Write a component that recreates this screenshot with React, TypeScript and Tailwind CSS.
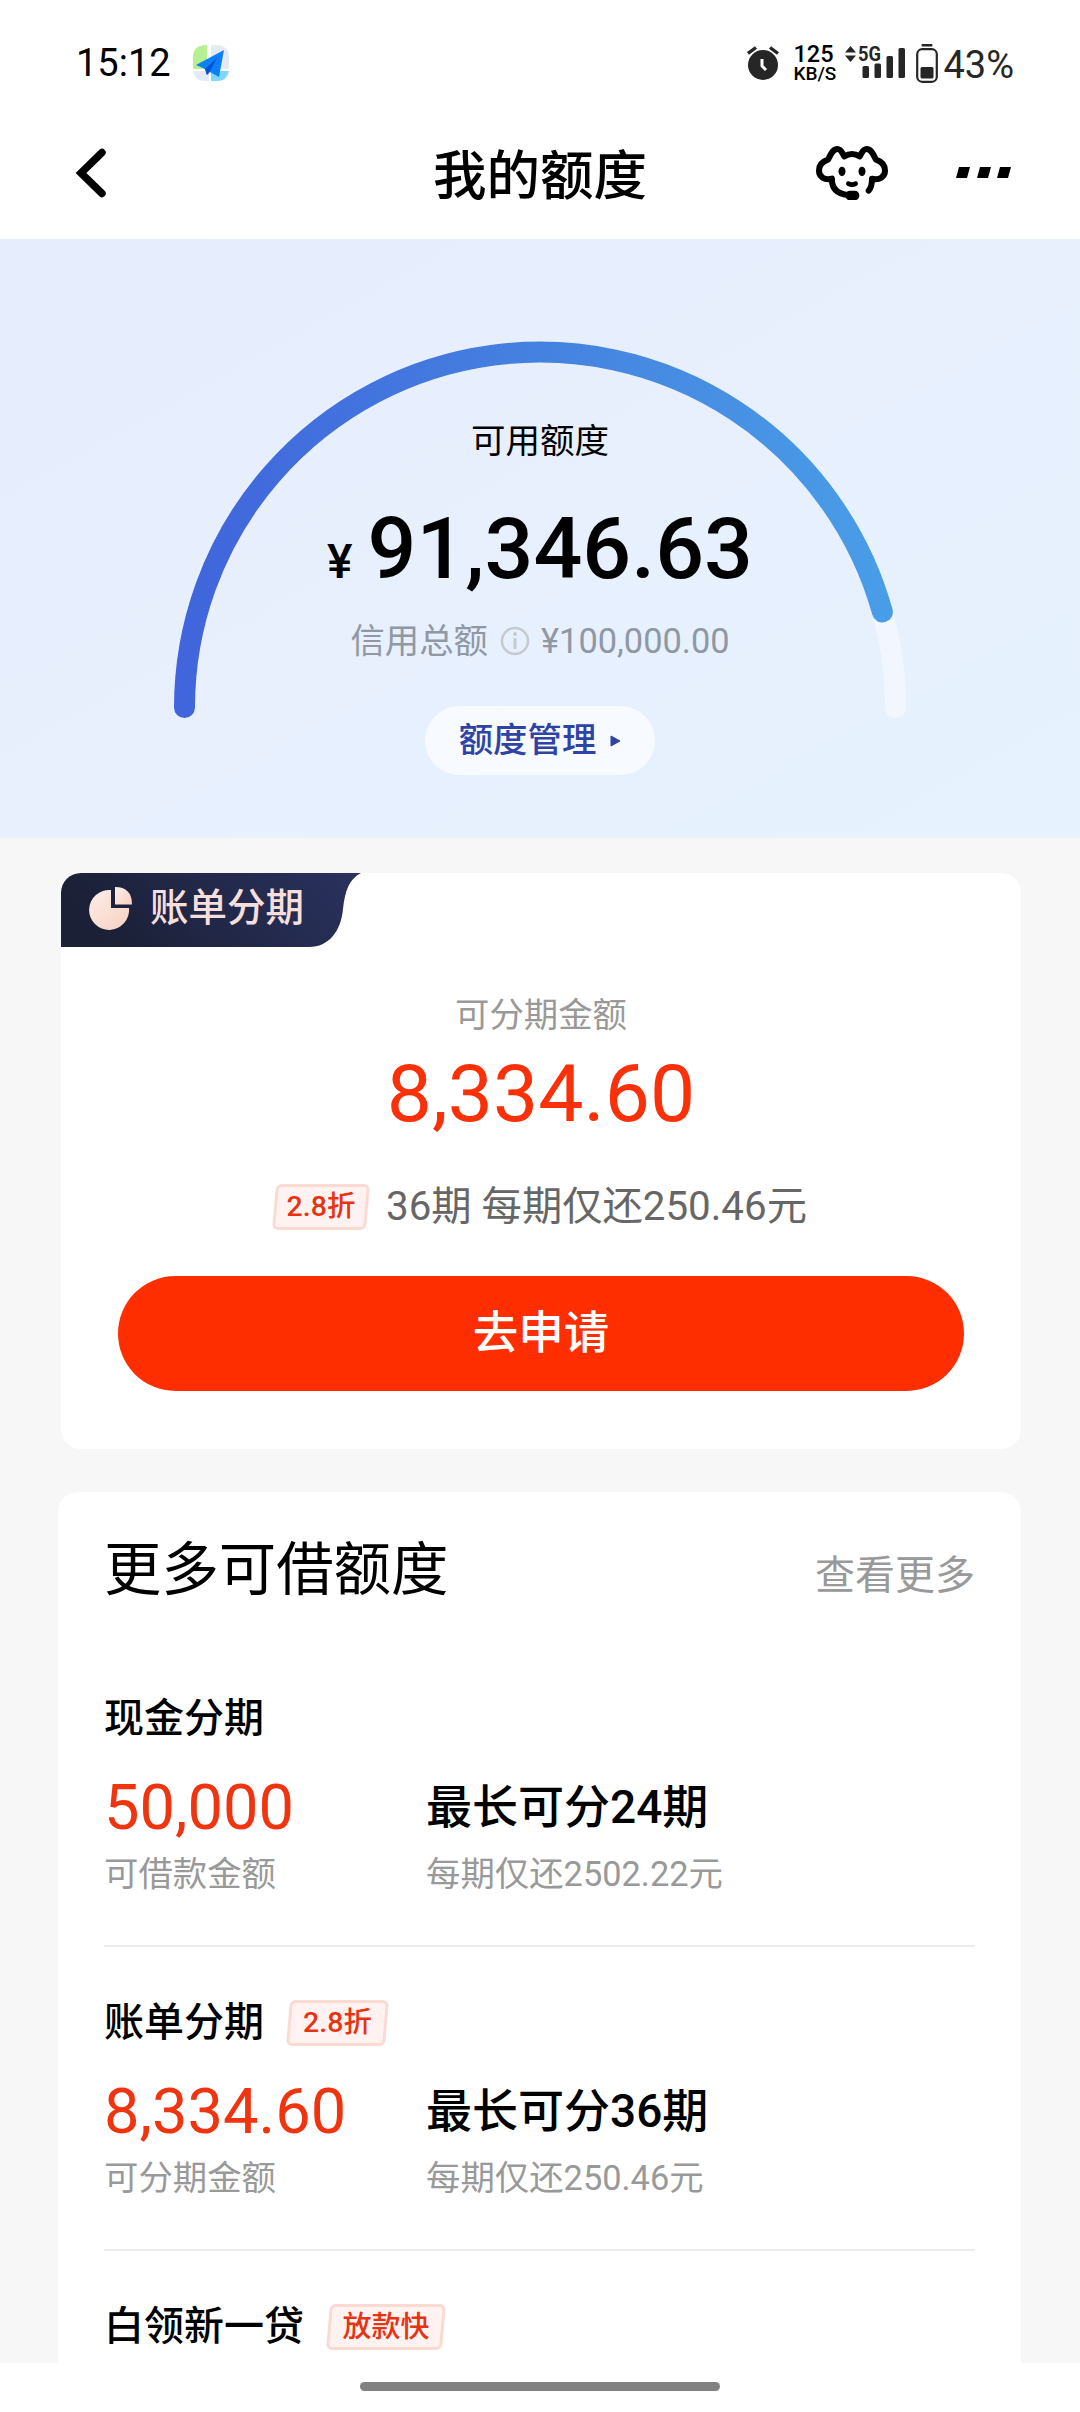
import { ReactNode } from 'react';

const FONT = "font-[Roboto,'Noto_Sans_CJK_SC',sans-serif]";

const LOANS = [
  {
    name: '现金分期',
    amount: '50,000',
    amountLabel: '可借款金额',
    term: '最长可分24期',
    monthly: '每期仅还2502.22元',
  },
  {
    name: '账单分期',
    tag: '2.8折',
    amount: '8,334.60',
    amountLabel: '可分期金额',
    term: '最长可分36期',
    monthly: '每期仅还250.46元',
  },
];

function Tag({ children, className }: { children: ReactNode; className: string }) {
  return (
    <span className={`relative flex h-[46px] items-center justify-center ${className}`}>
      <span className="absolute inset-y-0 inset-x-[2px] -skew-x-[5deg] rounded-md border-[3px] border-[#fbdad4] bg-[#fff2f0]" />
      <span className="relative font-medium leading-none text-[#e63312]">{children}</span>
    </span>
  );
}

function StatusBar() {
  return (
    <div className="flex h-[110px] items-center pt-4 pl-[76px] pr-[66px]">
      <span className="text-[38px] leading-10 text-black">15:12</span>
      <svg className="ml-[22px]" width="36" height="36" viewBox="0 0 36 36">
        <path d="M14 0v24H0V12Q0 0 14 0Z" fill="#b5f093" />
        <path d="M18 0h4q14 0 14 12v12H18Z" fill="#e6eaf1" />
        <path d="M0 26h16v10h-4Q2 36 0 26Z" fill="#e6eaf6" />
        <path d="M18 26h18q-2 10-12 10h-6Z" fill="#7fd5fb" />
        <path d="M31 5 3 20l9 4 2 6 3-3 9 5Z" fill="#0d80f8" />
        <path d="M24 13 12 24l2 6 3-4Z" fill="#0552d4" />
      </svg>
      <div className="ml-auto flex items-center text-[#262626]">
        <svg width="32" height="35" viewBox="0 0 32 35">
          <circle cx="16" cy="19" r="15" fill="currentColor" />
          <path d="M1 7.5 9 1.5M31 7.5 23 1.5" stroke="currentColor" strokeWidth="3.4" />
          <path d="M15 13v7l4 4" fill="none" stroke="#fff" strokeWidth="3" />
        </svg>
        <div className="ml-[14px] flex w-[45px] flex-col text-black">
          <span className="text-[23.500px] font-medium leading-[21px]">125</span>
          <span className="text-[19px] font-medium leading-[17px]">KB/S</span>
        </div>
        <svg className="ml-[7px] overflow-visible" width="62" height="36" viewBox="0 0 62 36">
          <path d="M0 7.500 5.500 1 11 7.500ZM0 10.500h11L5.500 17Z" fill="currentColor" />
          <text x="13" y="16" fontSize="21" fontWeight="700" textLength="23" lengthAdjust="spacingAndGlyphs" fill="currentColor">
            5G
          </text>
          <rect x="17.500" y="21" width="6.500" height="12" rx="1.500" fill="currentColor" />
          <rect x="29.500" y="18.500" width="6.500" height="14.500" rx="1.500" fill="currentColor" />
          <rect x="41.500" y="11" width="6.500" height="22" rx="1.500" fill="currentColor" />
          <rect x="53.500" y="3" width="6.500" height="30" rx="1.500" fill="currentColor" />
        </svg>
        <svg className="ml-[9px]" width="22" height="39" viewBox="0 0 22 39">
          <rect x="5.500" y="0" width="11" height="2.500" rx="1" fill="currentColor" />
          <rect x="1.200" y="5.200" width="19.600" height="32.600" rx="5" fill="none" stroke="currentColor" strokeWidth="2.200" />
          <rect x="4.500" y="23" width="13" height="11.500" rx="1.500" fill="currentColor" />
        </svg>
        <span className="ml-[5px] mt-[3px] text-[38px] leading-10">43%</span>
      </div>
    </div>
  );
}

function NavBar() {
  return (
    <div className="flex h-[129px] items-center justify-between pb-[3px] pl-[75px] pr-[68px]">
      <svg width="140" height="50" viewBox="0 0 140 50">
        <path d="M27 4.500 6 25l21 20.500" fill="none" stroke="#000" strokeWidth="7.500" strokeLinecap="round" />
      </svg>
      <h1 className="ml-[49px] mt-[7px] text-[53.500px] font-medium leading-[60px] text-black">我的额度</h1>
      <div className="flex items-center justify-end gap-[68px]">
        <svg width="72" height="54" viewBox="0 0 216 162" fill="none" stroke="#000" strokeWidth="18" strokeLinecap="round" strokeLinejoin="round">
          <path d="M158 134Q168 122 168 98C190 104 207 92 207 74C207 58 198 47 180 41C172 25 165 9 152 9C141 9 138 20 131 31Q108 17 85 31C78 20 75 9 64 9C51 9 44 25 36 41C18 47 9 58 9 74C9 92 26 104 48 98Q46 142 96 147" />
          <rect x="97" y="143" width="24" height="11" rx="5" />
          <ellipse cx="78" cy="76" rx="10.500" ry="14" fill="#000" stroke="none" />
          <ellipse cx="138" cy="76" rx="10.500" ry="14" fill="#000" stroke="none" />
          <path d="M97 113Q108 119 119 113" strokeWidth="14" />
        </svg>
        <svg width="56" height="12" viewBox="0 0 56 12">
          <path d="M3 0h11l-3 11H0ZM24 0h11l-3 11H21ZM44 0h11l-3 11H41Z" fill="#000" />
        </svg>
      </div>
    </div>
  );
}

function QuotaGauge() {
  return (
    <section className="relative flex h-[599px] flex-col items-center bg-gradient-to-br from-[#e6edfd] via-[#e8f0fe] to-[#e6f2fe] pt-[182px]">
      <svg className="absolute left-[170px] top-[99px]" width="740" height="386" viewBox="170 338 740 386" fill="none">
        <defs>
          <linearGradient id="arc" gradientUnits="userSpaceOnUse" x1="184" y1="0" x2="884" y2="0">
            <stop offset="0" stopColor="#4065dc" />
            <stop offset="0.5" stopColor="#4581e0" />
            <stop offset="1" stopColor="#499de7" />
          </linearGradient>
        </defs>
        <path d="M184.500 707.500A355.500 355.500 0 0 1 895.500 707.500" stroke="#f1f6ff" strokeWidth="21" strokeLinecap="round" />
        <path d="M184.500 707.500A355.500 355.500 0 0 1 882.400 612" stroke="url(#arc)" strokeWidth="21" strokeLinecap="round" />
      </svg>
      <p className="relative text-[34.500px] leading-10 text-black">可用额度</p>
      <p className="relative mt-[38px] flex h-[100px] items-baseline gap-[15px] font-medium leading-[100px] text-black">
        <span className="text-[48px]">¥</span>
        <span className="text-[86px]">91,346.63</span>
      </p>
      <p className="relative mt-[22px] flex items-center text-[34.400px] leading-10 text-[#9097a5]">
        信用总额
        <svg className="ml-[12px] mr-[11px]" width="30" height="30" viewBox="0 0 30 30" fill="none" stroke="#c6cacf">
          <circle cx="15" cy="15" r="13" strokeWidth="2.500" />
          <path d="M15 12v11" strokeWidth="3" />
          <circle cx="15" cy="8" r="1.900" fill="#c6cacf" stroke="none" />
        </svg>
        ¥100,000.00
      </p>
      <button className="relative mt-[45px] flex h-[69px] w-[230px] items-center justify-center gap-[14px] rounded-full bg-white/65 text-[34.400px] font-medium text-[#2f43a6]">
        额度管理
        <svg width="11" height="12" viewBox="0 0 11 12">
          <path d="M1 1v10l9-5Z" fill="#2f43a6" stroke="#2f43a6" strokeLinejoin="round" />
        </svg>
      </button>
    </section>
  );
}

function BillCard() {
  return (
    <section className="ml-[61px] mt-[35px] flex w-[960px] flex-col items-center overflow-hidden rounded-[20px] bg-white pb-[58px]">
      <div className="relative h-[74px] self-start">
        <svg className="absolute left-0 top-0" width="300" height="74" viewBox="0 0 300 74">
          <defs>
            <linearGradient id="tab" x1="0" y1="0.200" x2="1" y2="0">
              <stop offset="0" stopColor="#1b2036" />
              <stop offset="1" stopColor="#2a325f" />
            </linearGradient>
          </defs>
          <path d="M0 0H300C288 6 284 18 282 36C280 58 268 74 248 74H0Z" fill="url(#tab)" />
        </svg>
        <div className="relative flex h-[70px] items-center pl-7">
          <svg width="43" height="43" viewBox="0 0 43 43">
            <defs>
              <linearGradient id="pie" x1="0" y1="0" x2="1" y2="1">
                <stop offset="0" stopColor="#fdeeea" />
                <stop offset="1" stopColor="#f8d0c0" />
              </linearGradient>
            </defs>
            <path d="M22 3V21H40A20 20 0 1 1 22 3Z" fill="url(#pie)" />
            <path d="M26 0V17.500H43Q43 0 26 0Z" fill="url(#pie)" />
          </svg>
          <span className="ml-[18px] text-[38.500px] font-medium leading-10 text-[#f6dfdb]">账单分期</span>
        </div>
      </div>
      <p className="mt-12 text-[34.400px] leading-10 text-[#999999]">可分期金额</p>
      <p className="mt-[14px] text-[80.500px] leading-[90px] text-[#fa3008]">8,334.60</p>
      <div className="mr-[3px] mt-[45px] flex items-center">
        <Tag className="w-[98px] text-[28.500px]">2.8折</Tag>
        <span className="ml-[16px] text-[40.300px] leading-[46px] text-[#666666]">36期 每期仅还250.46元</span>
      </div>
      <button className="mt-[46px] h-[115px] w-[846px] rounded-full bg-[#ff2e00] pt-[2px] text-[45.500px] font-medium text-white">去申请</button>
    </section>
  );
}

function MoreQuota() {
  return (
    <section className="ml-[58px] mt-[43px] w-[963px] rounded-t-[20px] bg-white px-[46px] pt-[49px]">
      <div className="mb-[95px] flex h-[60px] items-center justify-between">
        <h2 className="text-[57.400px] leading-[60px] text-black">更多可借额度</h2>
        <span className="relative top-[5px] text-[40px] text-[#999999]">查看更多</span>
      </div>
      {LOANS.map((loan) => (
        <div key={loan.name} className="mb-[53px] border-b-2 border-[#ececec] pb-[51px]">
          <div className="flex h-[46px] items-center">
            <span className="text-[40px] font-medium leading-[46px] text-black">{loan.name}</span>
            {loan.tag && <Tag className="ml-[22px] w-[103px] text-[28.500px]">{loan.tag}</Tag>}
          </div>
          <div className="mt-[35px] grid grid-cols-[322px_1fr] gap-y-[17px]">
            <span className="text-[63.200px] leading-[60px] text-[#f03410]">{loan.amount}</span>
            <span className="text-[46px] font-medium leading-[60px] text-black">{loan.term}</span>
            <span className="text-[34.400px] leading-10 text-[#999999]">{loan.amountLabel}</span>
            <span className="text-[34.400px] leading-10 text-[#999999]">{loan.monthly}</span>
          </div>
        </div>
      ))}
      <div className="flex h-[60px] items-start">
        <span className="text-[40px] font-medium leading-[46px] text-black">白领新一贷</span>
        <Tag className="ml-[22px] w-[120px] text-[29px]">放款快</Tag>
      </div>
    </section>
  );
}

export default function App() {
  return (
    <div className={`flex h-[2412px] w-[1080px] flex-col overflow-hidden bg-[#f7f7f7] ${FONT}`}>
      <header className="bg-white">
        <StatusBar />
        <NavBar />
      </header>
      <main className="h-[2124px] shrink-0 overflow-hidden">
        <QuotaGauge />
        <BillCard />
        <MoreQuota />
      </main>
      <footer className="flex flex-1 justify-center bg-white pt-[19px]">
        <div className="h-[9px] w-[360px] rounded-full bg-[#808080]" />
      </footer>
    </div>
  );
}
